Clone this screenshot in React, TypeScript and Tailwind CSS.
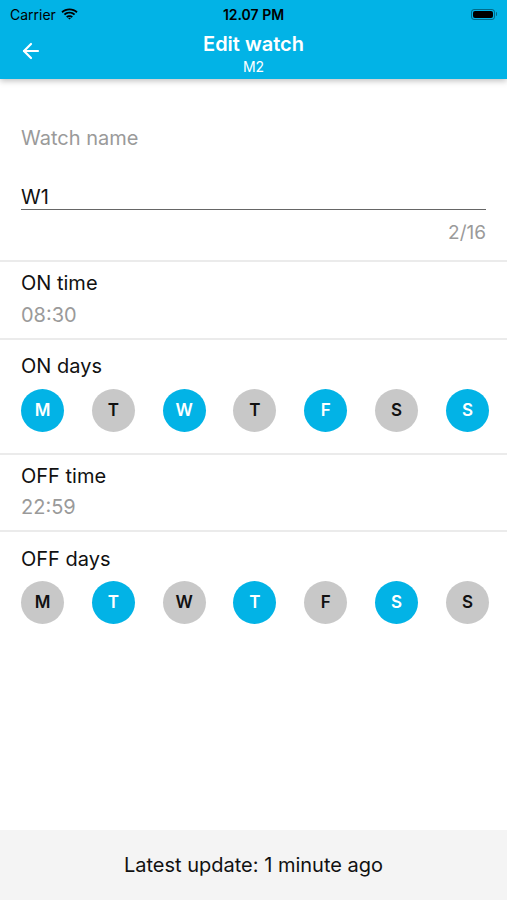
import { ArrowLeft } from 'lucide-react'

const blue = 'bg-[#02b3e6]'

function Day({ letter, on }: { letter: string; on: boolean }) {
  return (
    <div
      className={`flex h-[43px] w-[43px] items-center justify-center rounded-full text-[17px] font-semibold ${
        on ? `${blue} text-white` : 'bg-[#c8c8c8] text-[#111]'
      }`}
    >
      {letter}
    </div>
  )
}

function DayRow({ days, top }: { days: boolean[]; top: string }) {
  const letters = ['M', 'T', 'W', 'T', 'F', 'S', 'S']
  return (
    <div className={`${top} flex justify-between`}>
      {letters.map((l, i) => (
        <Day key={i} letter={l} on={days[i]} />
      ))}
    </div>
  )
}

const Divider = () => <div className="h-[2px] bg-[#ebebeb]" />

export default function App() {
  return (
    <div
      className="relative flex h-[900px] w-[507px] flex-col overflow-hidden bg-white text-[#111]"
      style={{ fontFamily: 'Inter, "Noto Sans", sans-serif' }}
    >
      <div className={`${blue} relative z-10 h-[79px] shadow-[0_2px_6px_rgba(0,0,0,0.25)]`}>
        {/* status bar */}
        <div className="flex h-[28px] items-center justify-between px-[10px] text-[14px] text-black">
          <div className="flex w-[120px] items-center gap-[5px]">
            <span>Carrier</span>
            <svg width="17" height="12" viewBox="0 0 17 12">
              <path d="M8.5 2.2c2.6 0 5 1 6.8 2.7l1.3-1.3C14.5 1.6 11.6.4 8.5.4S2.5 1.6.4 3.6l1.3 1.3C3.5 3.2 5.9 2.2 8.5 2.2z" fill="#000" />
              <path d="M8.5 5.6c1.7 0 3.2.6 4.4 1.7l1.3-1.3C12.7 4.6 10.7 3.8 8.5 3.8S4.3 4.6 2.8 6l1.3 1.3c1.2-1.1 2.7-1.700 4.4-1.7z" fill="#000" />
              <path d="M8.5 9c.8 0 1.5.3 2.1.8l1.3-1.3C11 7.6 9.8 7.2 8.5 7.2s-2.5.4-3.4 1.3l1.3 1.3c.6-.5 1.3-.8 2.1-.8z" fill="#000" />
              <path d="M8.5 11.6l1.4-1.4c-.4-.3-.9-.5-1.4-.5s-1 .2-1.4.5z" fill="#000" />
            </svg>
          </div>
          <span className="font-semibold">12.07 PM</span>
          <div className="flex w-[120px] justify-end">
            <div className="flex items-center">
              <div className="h-[11px] w-[24px] rounded-[3px] border border-black/40 p-[1px]">
                <div className="h-full w-full rounded-[2px] bg-black" />
              </div>
              <div className="ml-[1px] h-[4px] w-[1.5px] rounded-r bg-black/40" />
            </div>
          </div>
        </div>
        {/* nav bar */}
        <div className="relative flex h-[51px] flex-col items-center pt-[4px] text-white">
          <ArrowLeft className="absolute left-[19px] top-[11px]" size={24} strokeWidth={2.2} />
          <div className="text-[20px] font-semibold leading-[24px]">Edit watch</div>
          <div className="mt-[2px] text-[14px] leading-[17px]">M2</div>
        </div>
      </div>

      <div className="flex-1">
        {/* name field */}
        <div className="h-[181px] px-[21px] pt-[47px]">
          <div className="text-[20px] leading-[24px] text-[#9a9a9a]">Watch name</div>
          <div className="mt-[35px] border-b-[1.5px] border-[#666] text-[20px] leading-[24px]">W1</div>
          <div className="mt-[11px] text-right text-[19px] leading-[24px] text-[#9a9a9a]">2/16</div>
        </div>
        <Divider />

        <div className="h-[76px] px-[21px] pt-[9px]">
          <div className="text-[20px] leading-[24px]">ON time</div>
          <div className="mt-[8px] text-[20px] leading-[24px] text-[#9a9a9a]">08:30</div>
        </div>
        <Divider />

        <div className="h-[113px] pl-[21px] pr-[18px] pt-[14px]">
          <div className="text-[20px] leading-[24px]">ON days</div>
          <DayRow top="mt-[11px]" days={[true, false, true, false, true, false, true]} />
        </div>
        <Divider />

        <div className="h-[75px] px-[21px] pt-[9px]">
          <div className="text-[20px] leading-[24px]">OFF time</div>
          <div className="mt-[7px] text-[20px] leading-[24px] text-[#9a9a9a]">22:59</div>
        </div>
        <Divider />

        <div className="pl-[21px] pr-[18px] pt-[15px]">
          <div className="text-[20px] leading-[24px]">OFF days</div>
          <DayRow top="mt-[10px]" days={[false, true, false, true, false, true, false]} />
        </div>
      </div>

      <div className="flex h-[70px] items-center justify-center bg-[#f4f4f4] text-[20px]">
        Latest update: 1 minute ago
      </div>
    </div>
  )
}
